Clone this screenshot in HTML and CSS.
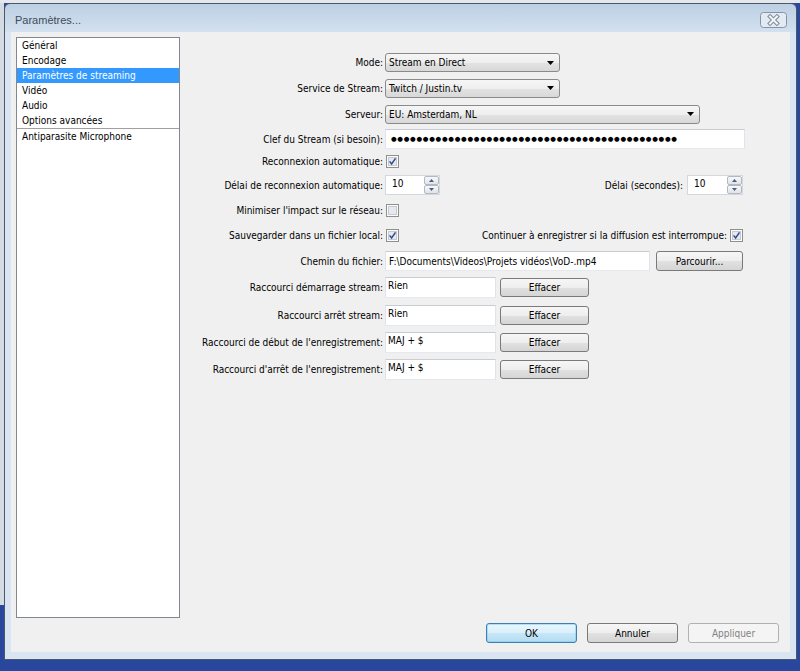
FILE: index.html
```html
<!DOCTYPE html>
<html lang="fr">
<head>
<meta charset="utf-8">
<title>Paramètres...</title>
<link rel="stylesheet" href="styles.css">
</head>
<body>
<div class="window">
  <div class="titlebar">
    <span class="title">Paramètres...</span>
    <span class="close"><svg width="27" height="16" viewBox="0 0 27 16"><rect x="0.5" y="0.5" width="26" height="15" rx="3" fill="#e2eaf3" stroke="#8494a6"/><path d="M10 4.5l7 7M17 4.5l-7 7" stroke="#7c8896" stroke-width="4" stroke-linecap="square"/><path d="M10 4.5l7 7M17 4.5l-7 7" stroke="#f4f6f8" stroke-width="2" stroke-linecap="square"/></svg></span>
  </div>
  <div class="client">
    <ul class="list">
      <li>Général</li>
      <li>Encodage</li>
      <li class="sel">Paramètres de streaming</li>
      <li>Vidéo</li>
      <li>Audio</li>
      <li class="sep">Options avancées</li>
      <li>Antiparasite Microphone</li>
    </ul>
    <div class="form">
      <div class="lbl">Mode:</div>
      <div class="ctl"><div class="combo w175"><span>Stream en Direct</span><svg class="arrow" width="7" height="4" viewBox="0 0 7 4"><path d="M0 0H7L3.5 4Z" fill="#000"/></svg></div></div>

      <div class="lbl">Service de Stream:</div>
      <div class="ctl"><div class="combo w175"><span>Twitch / Justin.tv</span><svg class="arrow" width="7" height="4" viewBox="0 0 7 4"><path d="M0 0H7L3.5 4Z" fill="#000"/></svg></div></div>

      <div class="lbl">Serveur:</div>
      <div class="ctl"><div class="combo w315"><span>EU: Amsterdam, NL</span><svg class="arrow" width="7" height="4" viewBox="0 0 7 4"><path d="M0 0H7L3.5 4Z" fill="#000"/></svg></div></div>

      <div class="lbl">Clef du Stream (si besoin):</div>
      <div class="ctl"><div class="tb key"><span class="dots">●●●●●●●●●●●●●●●●●●●●●●●●●●●●●●●●●●●●●●●●●●●●●</span></div></div>

      <div class="lbl">Reconnexion automatique:</div>
      <div class="ctl"><svg class="cb" width="13" height="13" viewBox="0 0 13 13"><rect x="0.5" y="0.5" width="12" height="12" fill="#fbfbfb" stroke="#8f8f8f"/><rect x="2.5" y="2.5" width="8" height="8" fill="#e6e9ed" stroke="#c5cad0"/><path d="M3.6 6.4l2 2.6 3.9-5.6" fill="none" stroke="#2f4c8e" stroke-width="1.5"/></svg></div>

      <div class="lbl">Délai de reconnexion automatique:</div>
      <div class="ctl split">
        <div class="spin w55"><span class="val">10</span><span class="sbs"><span class="sb"><svg width="5" height="3" viewBox="0 0 5 3"><path d="M2.5 0L5 3H0Z" fill="#4b5e80"/></svg></span><span class="sb"><svg width="5" height="3" viewBox="0 0 5 3"><path d="M0 0H5L2.5 3Z" fill="#4b5e80"/></svg></span></span></div>
        <div class="grp gap4"><span>Délai (secondes):</span>
          <div class="spin w56"><span class="val">10</span><span class="sbs"><span class="sb"><svg width="5" height="3" viewBox="0 0 5 3"><path d="M2.5 0L5 3H0Z" fill="#4b5e80"/></svg></span><span class="sb"><svg width="5" height="3" viewBox="0 0 5 3"><path d="M0 0H5L2.5 3Z" fill="#4b5e80"/></svg></span></span></div>
        </div>
      </div>

      <div class="lbl">Minimiser l'impact sur le réseau:</div>
      <div class="ctl"><svg class="cb" width="13" height="13" viewBox="0 0 13 13"><rect x="0.5" y="0.5" width="12" height="12" fill="#fbfbfb" stroke="#8f8f8f"/><rect x="2.5" y="2.5" width="8" height="8" fill="#e6e9ed" stroke="#c5cad0"/></svg></div>

      <div class="lbl">Sauvegarder dans un fichier local:</div>
      <div class="ctl split">
        <svg class="cb" width="13" height="13" viewBox="0 0 13 13"><rect x="0.5" y="0.5" width="12" height="12" fill="#fbfbfb" stroke="#8f8f8f"/><rect x="2.5" y="2.5" width="8" height="8" fill="#e6e9ed" stroke="#c5cad0"/><path d="M3.6 6.4l2 2.6 3.9-5.6" fill="none" stroke="#2f4c8e" stroke-width="1.5"/></svg>
        <div class="grp gap2"><span>Continuer à enregistrer si la diffusion est interrompue:</span><svg class="cb" width="13" height="13" viewBox="0 0 13 13"><rect x="0.5" y="0.5" width="12" height="12" fill="#fbfbfb" stroke="#8f8f8f"/><rect x="2.5" y="2.5" width="8" height="8" fill="#e6e9ed" stroke="#c5cad0"/><path d="M3.6 6.4l2 2.6 3.9-5.6" fill="none" stroke="#2f4c8e" stroke-width="1.5"/></svg></div>
      </div>

      <div class="lbl">Chemin du fichier:</div>
      <div class="ctl"><div class="tb path">F:\Documents\Videos\Projets vidéos\VoD-.mp4</div><div class="btn browse">Parcourir...</div></div>

      <div class="lbl">Raccourci démarrage stream:</div>
      <div class="ctl"><div class="tb hk">Rien</div><div class="btn clear">Effacer</div></div>

      <div class="lbl">Raccourci arrêt stream:</div>
      <div class="ctl"><div class="tb hk">Rien</div><div class="btn clear">Effacer</div></div>

      <div class="lbl">Raccourci de début de l'enregistrement:</div>
      <div class="ctl"><div class="tb hk">MAJ + $</div><div class="btn clear">Effacer</div></div>

      <div class="lbl">Raccourci d'arrêt de l'enregistrement:</div>
      <div class="ctl"><div class="tb hk">MAJ + $</div><div class="btn clear">Effacer</div></div>
    </div>
    <div class="footer">
      <div class="btn fbtn ok">OK</div>
      <div class="btn fbtn">Annuler</div>
      <div class="btn fbtn disabled">Appliquer</div>
    </div>
  </div>
</div>
</body>
</html>
```

FILE: styles.css
```css
html, body {
  margin: 0;
}

body {
  width: 800px;
  height: 671px;
  overflow: hidden;
  box-sizing: border-box;
  padding: 3px 0 0 4px;
  font-family: "DejaVu Sans Condensed", "Liberation Sans", sans-serif;
  font-size: 10px;
  color: #000;
  background:
    linear-gradient(#e4e7eb, #e4e7eb) 0 0 / 100% 3px no-repeat,
    linear-gradient(#d5dbe3, #d5dbe3) 0 0 / 4px 605px no-repeat,
    #28479d;
}

.window {
  width: 793px;
  height: 657px;
  box-sizing: border-box;
  border: 1px solid #4d5866;
  border-radius: 6px 6px 0 0;
  padding: 0 6px 7px;
  background: linear-gradient(#bccfe3 0, #d3e1ef 28px, #d9e5f2 29px, #d9e5f2 100%);
  display: flex;
  flex-direction: column;
}

.titlebar {
  height: 28px;
  box-sizing: border-box;
  padding: 3px 0 0 4px;
  display: flex;
  align-items: center;
  justify-content: space-between;
}

.title {
  font-family: "Liberation Sans", sans-serif;
  font-size: 11px;
  color: #3e4b5a;
}

.close {
  align-self: flex-start;
  margin-top: 5px;
  margin-right: 3px;
  height: 16px;
}

.close svg {
  display: block;
}

.client {
  flex: 1;
  background: #f0f0f0;
  display: grid;
  grid-template-columns: 164px 1fr;
  grid-template-rows: 581px auto;
  padding: 5px 11px 0 5px;
  box-sizing: border-box;
}

.list {
  margin: 0;
  padding: 0;
  list-style: none;
  border: 1px solid #828790;
  background: #fff;
}

.list li {
  height: 15px;
  line-height: 15px;
  padding-left: 5px;
  white-space: nowrap;
}

.list li.sel {
  background: #3399ff;
  color: #fff;
}

.list li.sep {
  border-bottom: 1px solid #a0a0a0;
}

.form {
  align-self: start;
  margin-top: 13px;
  display: grid;
  grid-template-columns: 203px 360px;
  column-gap: 2px;
  grid-template-rows: 25px 26px 26px 24px 21px 26px 25px 25px 26px 27px 28px 27px 27px;
  align-items: center;
}

.lbl {
  text-align: right;
  white-space: nowrap;
}

.ctl {
  display: flex;
  align-items: center;
  white-space: nowrap;
}

.ctl.split {
  justify-content: space-between;
  padding-right: 2px;
}

.grp {
  display: flex;
  align-items: center;
}

.gap4 { gap: 4px; }
.gap2 { gap: 2px; }

.cb {
  display: block;
  margin-left: 1px;
}

.combo {
  height: 19px;
  box-sizing: border-box;
  border: 1px solid #8a8a8a;
  border-radius: 3px;
  background: linear-gradient(#f6f6f6 0%, #eeeeee 50%, #e3e3e3 51%, #d8d8d8 100%);
  display: flex;
  align-items: center;
  justify-content: space-between;
  padding: 0 5px 0 3px;
}

.w175 { width: 175px; }
.w315 { width: 315px; }

.arrow {
  display: block;
}

.tb {
  background: #fff;
  border: 1px solid;
  border-color: #c9ccd3 #e2e3ea #e3e9ef #e2e3ea;
  box-sizing: border-box;
  display: flex;
  align-items: center;
  padding: 0 3px;
  white-space: nowrap;
  overflow: hidden;
}

.key {
  width: 360px;
  height: 20px;
  padding-left: 5px;
}

.dots {
  font-family: "DejaVu Sans", sans-serif;
  font-size: 6.5px;
  letter-spacing: 0.7px;
}

.path {
  width: 265px;
  height: 20px;
}

.hk {
  width: 111px;
  height: 21px;
  align-items: flex-start;
  padding: 2px 2px 0;
}

.spin {
  height: 20px;
  box-sizing: border-box;
  border: 1px solid #d3d8df;
  background: #fff;
  display: flex;
}

.w55 { width: 55px; }
.w56 { width: 56px; }

.val {
  flex: 1;
  padding: 2px 0 0 6px;
}

.sbs {
  display: flex;
  flex-direction: column;
  width: 15px;
}

.sb {
  flex: 1;
  border: 1px solid #b3b9c1;
  border-radius: 2px;
  background: linear-gradient(#f7f8fa, #dfe4ea);
  display: flex;
  align-items: center;
  justify-content: center;
}

.sb svg {
  display: block;
}

.btn {
  box-sizing: border-box;
  border: 1px solid #7a7a7a;
  border-radius: 3px;
  background: linear-gradient(#f6f6f6 0%, #eeeeee 50%, #e1e1e1 51%, #d5d5d5 100%);
  display: flex;
  align-items: center;
  justify-content: center;
  white-space: nowrap;
}

.browse {
  width: 87px;
  height: 20px;
  margin-left: 6px;
}

.clear {
  width: 89px;
  height: 19px;
  margin-left: 4px;
}

.footer {
  grid-column: 1 / -1;
  display: flex;
  justify-content: flex-end;
  gap: 10px;
  margin-top: 5px;
}

.fbtn {
  width: 91px;
  height: 20px;
}

.ok {
  border-color: #3c7fb1;
  background: linear-gradient(#eaf6fd 0%, #d9f0fc 50%, #c6e7f8 51%, #b5dcf2 100%);
  box-shadow: inset 0 0 0 1px rgba(120, 200, 240, 0.5);
}

.disabled {
  border-color: #adb2b5;
  background: #f4f4f4;
  color: #838383;
}
```
